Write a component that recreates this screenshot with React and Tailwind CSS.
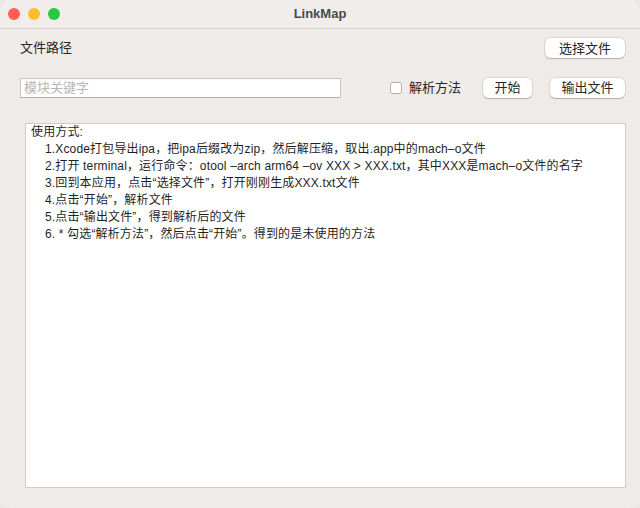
import React from 'react';

const font = { fontFamily: '"Liberation Sans", "Noto Sans CJK SC", sans-serif' };

const MacButton = ({ children, className = '' }) => (
  <button
    className={`h-5 bg-white rounded-[5px] text-[13px] leading-none text-[#262626] shadow-[0_0_0_0.5px_rgba(0,0,0,0.18),0_1px_1px_rgba(0,0,0,0.18)] ${className}`}
  >
    {children}
  </button>
);

const steps = [
  '1.Xcode打包导出ipa，把ipa后缀改为zip，然后解压缩，取出.app中的mach–o文件',
  '2.打开 terminal，运行命令：otool –arch arm64 –ov XXX > XXX.txt，其中XXX是mach–o文件的名字',
  '3.回到本应用，点击“选择文件”，打开刚刚生成XXX.txt文件',
  '4.点击“开始”，解析文件',
  '5.点击“输出文件”，得到解析后的文件',
  '6. * 勾选“解析方法”，然后点击“开始”。得到的是未使用的方法',
];

export default function App() {
  return (
    <div className="w-[640px] h-[508px] bg-[#e9e7e6]" style={font}>
      <div className="w-full h-full rounded-[10px] overflow-hidden bg-[#efebe9] flex flex-col">
        {/* title bar */}
        <div className="relative h-[29px] shrink-0 border-b border-[#d3cfcd] bg-[#f1edeb] flex items-center justify-center">
          <div className="absolute left-[8px] top-[8px] flex gap-[8px]">
            <span className="w-3 h-3 rounded-full bg-[#fe5f57]" />
            <span className="w-3 h-3 rounded-full bg-[#febc2e]" />
            <span className="w-3 h-3 rounded-full bg-[#28c840]" />
          </div>
          <span className="text-[13px] font-bold text-[#4a4a4a]">LinkMap</span>
        </div>

        {/* path row */}
        <div className="mt-[9px] h-5 pl-5 pr-[15px] flex items-center justify-between">
          <span className="text-[13px] text-[#262626]">文件路径</span>
          <MacButton className="w-[80px]">选择文件</MacButton>
        </div>

        {/* search row */}
        <div className="mt-[19px] h-[21px] pl-5 pr-[15px] flex items-center">
          <div className="w-[321px] h-5 bg-white border border-[#c9c6c5] border-b-[#b3b0af] flex items-center pl-[3px]">
            <span className="text-[13px] text-[#b9b6b5]">模块关键字</span>
          </div>
          <div className="ml-[49px] flex items-center">
            <span className="w-3 h-3 bg-white rounded-[3px] border border-[#b0adac]" />
            <span className="ml-[7px] text-[13px] text-[#262626]">解析方法</span>
          </div>
          <MacButton className="ml-[22px] w-[49px]">开始</MacButton>
          <MacButton className="ml-[18px] w-[75px]">输出文件</MacButton>
        </div>

        {/* output area */}
        <div className="mt-[25px] ml-[25px] w-[601px] h-[365px] bg-white border border-[#cfcccb] px-[5px] text-[12px] leading-[17px] tracking-[0.15px] text-[#1f1f1f]">
          <div>使用方式:</div>
          {steps.map((s) => (
            <div key={s} className="pl-[14px] whitespace-nowrap">
              {s}
            </div>
          ))}
        </div>
      </div>
    </div>
  );
}
